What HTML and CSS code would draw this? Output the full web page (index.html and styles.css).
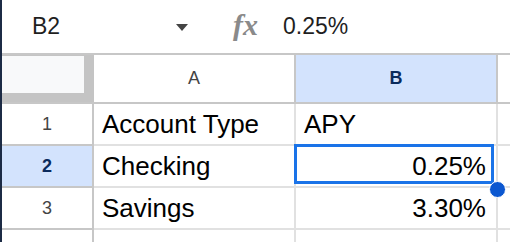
FILE: index.html
```html
<!DOCTYPE html>
<html lang="en">
<head>
<meta charset="UTF-8" />
<title>Sheet</title>
<link rel="stylesheet" href="styles.css">
</head>
<body>

<div class="app">
  <!-- Formula bar -->
  <div class="toolbar">
    <div class="name-box">B2</div>
    <span class="caret"></span>
    <span class="fx">fx</span>
    <div class="formula">0.25%</div>
  </div>

  <!-- Grid -->
  <div class="grid">
    <div class="corner"><div class="corner-inner"></div></div>
    <div class="col-head">A</div>
    <div class="col-head active">B</div>
    <div class="col-head last"></div>

    <div class="row-head">1</div>
    <div class="cell">Account Type</div>
    <div class="cell">APY</div>
    <div class="cell last"></div>

    <div class="row-head active">2</div>
    <div class="cell">Checking</div>
    <div class="cell num selected">0.25%<span class="handle"></span></div>
    <div class="cell last"></div>

    <div class="row-head">3</div>
    <div class="cell">Savings</div>
    <div class="cell num">3.30%</div>
    <div class="cell last"></div>

    <div class="row-head">4</div>
    <div class="cell"></div>
    <div class="cell"></div>
    <div class="cell last"></div>
  </div>
</div>

</body>
</html>
```

FILE: styles.css
```css
/* --- Genel --- */
body {
  margin: 0;
  font-family: "Liberation Sans", Arial, sans-serif;
  background: #fff;
  overflow: hidden;
}
.app {
  border-left: 2px solid #1c2b45;
  height: 242px;
  overflow: hidden;
}

/* Formula bar */
.toolbar {
  height: 53px;
  border-bottom: 2px solid #c7c7c7;
  display: flex;
  align-items: center;
  padding-left: 30px;
  color: #1f1f1f;
}
.name-box {
  width: 144px;
  font-size: 23px;
}
.caret {
  width: 0;
  height: 0;
  border-left: 6.5px solid transparent;
  border-right: 6.5px solid transparent;
  border-top: 7px solid #444;
  margin-top: 1px;
}
.fx {
  margin-left: 45px;
  width: 26px;
  font-family: "Liberation Serif", "Times New Roman", serif;
  font-style: italic;
  font-weight: bold;
  font-size: 30px;
  color: #8a8a8a;
  margin-top: -3px;
}
.formula {
  margin-left: 24px;
  font-size: 23px;
}

/* Grid */
.grid {
  display: grid;
  grid-template-columns: 92px 202px 202px 1fr;
  grid-auto-rows: 42px;
  grid-template-rows: 49px;
}
.corner {
  background: #c4c4c4;
  border-bottom: 2px solid #c7c7c7;
  display: flex;
}
.corner-inner {
  background: #f8f9fa;
  width: 82px;
  height: 37px;
  margin-top: 1px;
}
.col-head,
.row-head {
  border-right: 2px solid #c7c7c7;
  border-bottom: 2px solid #c7c7c7;
  display: flex;
  align-items: center;
  justify-content: center;
  font-size: 18px;
  color: #444;
}
.col-head.active,
.row-head.active {
  background: #d3e3fd;
  color: #0a2a5c;
  font-weight: bold;
}
.cell {
  border-right: 2px solid #e1e1e1;
  border-bottom: 2px solid #e1e1e1;
  display: flex;
  align-items: center;
  padding: 0 8px;
  font-size: 26px;
  color: #000;
  position: relative;
}
.cell.num {
  justify-content: flex-end;
  padding-right: 10px;
}
.last {
  border-right: none;
}

/* Seçili hücre */
.selected::after {
  content: "";
  position: absolute;
  top: -2px;
  left: -2px;
  right: 2px;
  bottom: 2px;
  border: 3px solid #1a73e8;
  pointer-events: none;
}
.handle {
  position: absolute;
  right: -10px;
  bottom: -12px;
  width: 15px;
  height: 15px;
  border-radius: 50%;
  background: #0b57d0;
  border: 1px solid #fff;
  z-index: 2;
}
```
